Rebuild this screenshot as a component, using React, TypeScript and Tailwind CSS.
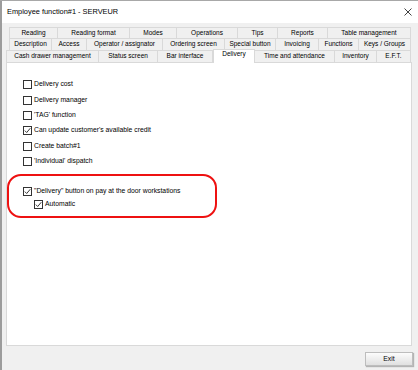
import React from "react";

type Tab = { label: string; w: number };

const row1: Tab[] = [
  { label: "Reading", w: 49 },
  { label: "Reading format", w: 72 },
  { label: "Modes", w: 47 },
  { label: "Operations", w: 61 },
  { label: "Tips", w: 40 },
  { label: "Reports", w: 50 },
  { label: "Table management", w: 83 },
];
const row2: Tab[] = [
  { label: "Description", w: 43 },
  { label: "Access", w: 35 },
  { label: "Operator / assignator", w: 76 },
  { label: "Ordering screen", w: 62 },
  { label: "Special button", w: 51 },
  { label: "Invoicing", w: 43 },
  { label: "Functions", w: 40 },
  { label: "Keys / Groups", w: 52 },
];
const row3: Tab[] = [
  { label: "Cash drawer management", w: 93 },
  { label: "Status screen", w: 59 },
  { label: "Bar interface", w: 55 },
  { label: "Delivery", w: 42 },
  { label: "Time and attendance", w: 80 },
  { label: "Inventory", w: 42 },
  { label: "E.F.T.", w: 34 },
];

function TabRow({ tabs, h, selected }: { tabs: Tab[]; h: number; selected?: string }) {
  return (
    <div className="flex items-end" style={{ height: h }}>
      {tabs.map((t, i) => {
        const sel = t.label === selected;
        return (
          <div
            key={t.label}
            className={
              sel
                ? "relative z-10 flex items-start justify-center bg-white border-t border-l border-r border-[#d9d9d9] pt-[1px] -mb-[1px]"
                : "flex items-center justify-center bg-[#f0f0f0] border-t border-r border-[#d9d9d9] " +
                  (i === 0 ? "border-l" : "")
            }
            style={{ width: t.w, height: sel ? h + 2 : h }}
          >
            <span className="text-[6.5px] leading-none text-black whitespace-nowrap">{t.label}</span>
          </div>
        );
      })}
    </div>
  );
}

function Box({ checked }: { checked?: boolean }) {
  return (
    <div className="w-[9px] h-[9px] border border-[#333333] bg-white flex items-center justify-center shrink-0">
      {checked && (
        <svg width="7" height="7" viewBox="0 0 7 7">
          <path d="M0.8 3.6 L2.7 5.5 L6.3 1.2" fill="none" stroke="#222" strokeWidth="0.9" />
        </svg>
      )}
    </div>
  );
}

function Check({ label, checked, indent }: { label: string; checked?: boolean; indent?: boolean }) {
  return (
    <div className={"flex items-center h-[15.4px] gap-[2px] " + (indent ? "pl-[11px]" : "")}>
      <Box checked={checked} />
      <span className="text-[6.8px] leading-none text-black whitespace-nowrap">{label}</span>
    </div>
  );
}

export default function App() {
  return (
    <div
      className="relative w-[418px] h-[370px] bg-[#f0f0f0] overflow-hidden flex flex-col"
      style={{ fontFamily: '"Liberation Sans", Arial, sans-serif' }}
    >
      <div className="absolute left-0 top-0 bottom-0 w-[2px] bg-[#9c9c9c]" />
      <div className="absolute left-0 top-0 right-0 h-[1px] bg-[#a8a8a8]" />
      {/* title bar */}
      <div className="h-[23px] bg-white flex items-center justify-between pl-[7px] pr-[6px] shrink-0">
        <span className="text-[7.4px] text-black leading-none">Employee function#1 - SERVEUR</span>
        <svg width="8" height="8" viewBox="0 0 8 8">
          <path d="M0.5 0.5 L7.5 7.5 M7.5 0.5 L0.5 7.5" stroke="#111" strokeWidth="0.8" />
        </svg>
      </div>
      {/* tabs */}
      <div className="pt-[4px] flex flex-col shrink-0">
        <div className="pl-[9px]">
          <TabRow tabs={row1} h={11} />
        </div>
        <div className="pl-[9px]">
          <TabRow tabs={row2} h={12} />
        </div>
        <div className="pl-[6px]">
          <TabRow tabs={row3} h={12} selected="Delivery" />
        </div>
      </div>
      {/* panel */}
      <div className="ml-[6px] w-[406px] h-[284px] bg-white border border-[#d9d9d9] pl-[16px] pt-[14px] flex flex-col shrink-0">
        <Check label="Delivery cost" />
        <Check label="Delivery manager" />
        <Check label="'TAG' function" />
        <Check label="Can update customer's available credit" checked />
        <Check label="Create batch#1" />
        <Check label="'Individual' dispatch" />
        <div className="h-[16px]" />
        <div className="flex flex-col">
          <div className="flex items-center h-[13px] gap-[2px]">
            <Box checked />
            <span className="text-[6.8px] leading-none text-black whitespace-nowrap">
              "Delivery" button on pay at the door workstations
            </span>
          </div>
          <div className="flex items-center h-[13px] gap-[2px] pl-[11px]">
            <Box checked />
            <span className="text-[6.8px] leading-none text-black whitespace-nowrap">Automatic</span>
          </div>
        </div>
      </div>
      {/* footer */}
      <div className="flex justify-end pr-[5px] pt-[6px]">
        <button className="w-[48px] h-[14px] border border-[#bdbdbd] bg-gradient-to-b from-[#fcfcfc] to-[#e0e0e0] shadow-[1px_1px_1px_rgba(0,0,0,0.25)] flex items-center justify-center">
          <span className="text-[6.8px] leading-none text-black">Exit</span>
        </button>
      </div>
      {/* highlight */}
      <div className="absolute left-[7px] top-[174px] w-[210px] h-[44px] border-[2.5px] border-[#ee1111] rounded-[14px] pointer-events-none" />
    </div>
  );
}
